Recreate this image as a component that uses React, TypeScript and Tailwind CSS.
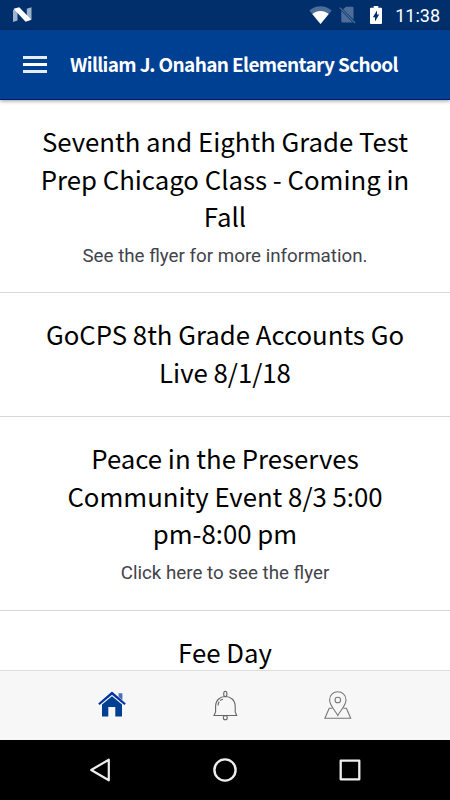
import type { ReactNode } from "react";

interface NewsItem {
  id: number;
  lines: string[];
  summary?: string;
}

const newsItems: NewsItem[] = [
  {
    id: 1,
    lines: ["Seventh and Eighth Grade Test", "Prep Chicago Class - Coming in", "Fall"],
    summary: "See the flyer for more information.",
  },
  { id: 2, lines: ["GoCPS 8th Grade Accounts Go", "Live 8/1/18"] },
  {
    id: 3,
    lines: ["Peace in the Preserves", "Community Event 8/3 5:00", "pm-8:00 pm"],
    summary: "Click here to see the flyer",
  },
  { id: 4, lines: ["Fee Day"] },
];

function StatusBar() {
  return (
    <div className="flex h-[30px] shrink-0 items-center bg-[#002f6c] pl-[13px] pr-[10px] text-white">
      <svg width="19" height="16" viewBox="0 0 19 16">
        <path d="M0 3 L4.5 1.5 V13.5 L0 15Z M13.8 1.8 L18.5 .3 V12.5 L13.8 14Z" fill="#9fb3cc" />
        <path d="M.6 1.8 L6.2 .2 L18.4 12.8 L12.6 14.8Z" fill="#fff" />
      </svg>
      <div className="flex-1" />
      <svg className="mr-[7px]" width="23" height="18" viewBox="0 0 23 18">
        <path d="M.3 4.6 C7 -1.1 16 -1.1 22.7 4.6 L11.5 18Z" fill="#4d6e98" />
        <path d="M3.3 8.1 C8 4.1 15 4.1 19.7 8.1 L11.5 18Z" fill="#fff" />
      </svg>
      <svg className="mr-[14px]" width="17" height="18" viewBox="0 0 17 18">
        <path d="M7 .7 H13.2 Q14.5 .7 14.5 2 V13.6 L4 3.2Z M2.3 4.8 L13.6 16.6 H3.6 Q2.3 16.6 2.3 15.3Z" fill="#4d6e98" />
        <path d="M.8 1.6 L16 17" stroke="#4d6e98" strokeWidth="1.3" />
      </svg>
      <svg className="mr-[13px]" width="12" height="18" viewBox="0 0 12 18">
        <path d="M3.7 0 H8.3 V1.8 H11 Q12 1.8 12 2.8 V17 Q12 18 11 18 H1 Q0 18 0 17 V2.8 Q0 1.8 1 1.8 H3.7Z" fill="#fff" />
        <path d="M7 4.4 V8.6 H9.2 L5 15.6 V11.3 H2.8Z" fill="#002f6c" />
      </svg>
      <span className="mt-px font-[Roboto,sans-serif] text-[18px] leading-none">11:38</span>
    </div>
  );
}

function AppHeader() {
  return (
    <header className="relative z-10 flex h-[70px] shrink-0 items-center border-b border-[#001a75] bg-[#004093] pl-[23px] shadow-[0_1px_4px_rgba(0,0,0,0.4)]">
      <button className="mr-[23px] flex w-6 flex-col gap-[4px]" aria-label="Menu">
        <span className="h-[3px] bg-white/90" />
        <span className="h-[3px] bg-white" />
        <span className="h-[3px] bg-white/90" />
      </button>
      <h1 className="whitespace-nowrap pb-[3px] font-['Noto_Sans_CJK_SC',sans-serif] text-[19px] font-bold leading-none tracking-[-0.63px] text-white">
        William J. Onahan Elementary School
      </h1>
    </header>
  );
}

function NewsRow({ item }: { item: NewsItem }) {
  return (
    <article className="border-b border-[#d8d8d8] pt-[22px] pb-[26.2px] text-center">
      <h2 className="font-['Noto_Sans_CJK_SC',sans-serif] text-[25.75px] leading-[37.5px] text-black">
        {item.lines.map((line) => (
          <span key={line} className="block whitespace-nowrap">
            {line}
          </span>
        ))}
      </h2>
      {item.summary && (
        <p className="-mb-[3px] pt-2 font-[Roboto,sans-serif] text-[18.75px] leading-[26.5px] text-[#43434b]">{item.summary}</p>
      )}
    </article>
  );
}

function TabButton({ label, children }: { label: string; children: ReactNode }) {
  return (
    <button className="flex w-[112.5px] items-center justify-center" aria-label={label}>
      {children}
    </button>
  );
}

function TabBar() {
  return (
    <nav className="flex h-[70px] shrink-0 justify-center border-t border-[#dcdcdc] bg-[#f7f7f7]">
      <TabButton label="Home">
        <svg className="mr-[2px] mb-px" width="28" height="30" viewBox="0 0 28 30" fill="#004093">
          <path d="M20.6 3.3 H24.4 V10.3 L20.6 6.8Z" fill="#4a6fb5" />
          <path d="M.2 13.4 L14 1.6 L27.8 13.4 L26.4 15 L14 4.7 L1.6 15Z" fill="#0033a0" />
          <path d="M4 14.5 L14 6.2 L24 14.5 V26.5 H17.3 V17 H10.3 V26.5 H4Z" />
        </svg>
      </TabButton>
      <TabButton label="Notifications">
        <svg width="26" height="32" viewBox="0 0 26 32" fill="none" stroke="#666" strokeWidth="1.1">
          <ellipse cx="13.3" cy="4" rx="1.6" ry="2.7" />
          <path d="M3.6 22 V16.5 C3.6 3.2 23.2 3.2 23.2 16.5 V22 L24.7 25.5 H2Z" />
          <path d="M6 15.5 C6.3 12 8 9.8 11 9.2" strokeDasharray="4 1.5" />
          <circle cx="13.3" cy="27.7" r="2" />
        </svg>
      </TabButton>
      <TabButton label="Map">
        <svg className="mb-px" width="28" height="30" viewBox="0 0 28 30" fill="none" stroke="#777" strokeWidth="1.1">
          <path d="M13.8 25.5 C11.5 21 5.6 15.5 5.6 10 C5.6 -1 22 -1 22 10 C22 15.5 16.1 21 13.8 25.5Z" />
          <circle cx="13.8" cy="10" r="2.8" />
          <path d="M8.2 18.3 H5.2 L.9 28.3 H26.7 L22.4 18.3 H19.4" />
        </svg>
      </TabButton>
    </nav>
  );
}

function SystemNav() {
  return (
    <div className="flex h-[60px] shrink-0 items-center bg-black">
      <svg className="ml-[89px]" width="22" height="26" viewBox="0 0 22 26" fill="none" stroke="#eee" strokeWidth="2.2" strokeLinejoin="round">
        <path d="M2.2 13 L19.8 2.7 V23.3Z" />
      </svg>
      <svg className="ml-[101px]" width="26" height="26" viewBox="0 0 26 26" fill="none" stroke="#eee" strokeWidth="2.4">
        <circle cx="13" cy="13" r="10.6" />
      </svg>
      <svg className="ml-[101px]" width="22" height="22" viewBox="0 0 22 22" fill="none" stroke="#eee" strokeWidth="2.3" strokeLinejoin="round">
        <rect x="1.7" y="1.7" width="18.6" height="18.6" />
      </svg>
    </div>
  );
}

export default function App() {
  return (
    <div className="flex h-[800px] w-[450px] flex-col overflow-hidden bg-white">
      <StatusBar />
      <AppHeader />
      <main className="min-h-0 flex-1 overflow-hidden">
        {newsItems.map((item) => (
          <NewsRow key={item.id} item={item} />
        ))}
      </main>
      <TabBar />
      <SystemNav />
    </div>
  );
}
